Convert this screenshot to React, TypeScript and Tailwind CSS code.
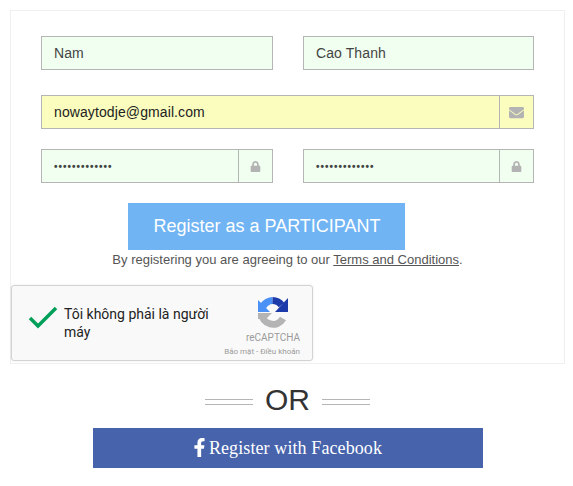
import React from 'react';
import { FaFacebookF, FaEnvelope, FaLock } from 'react-icons/fa';

const fieldClass = 'h-[34px] border border-[#b5b5b5] flex text-[14px] text-[#444]';

function PasswordField({ width }: { width: string }) {
  return (
    <div className={`${fieldClass} ${width} bg-[#f0fff0]`}>
      <div className="flex-1 pl-3 flex items-center leading-none">
        <span className="font-bold text-[10px] tracking-[1px] pt-[1px] text-[#444]">•••••••••••••</span>
      </div>
      <div className="w-[34px] border-l border-[#b5b5b5] flex items-center justify-center">
        <FaLock className="text-[#b3b3b3] text-[11px]" />
      </div>
    </div>
  );
}

function RecaptchaLogo() {
  return (
    <svg width="30" height="31" viewBox="0 0 30 31" fill="none">
      {/* grey lower half */}
      <path d="M3.5 16 A11.5 11.5 0 0 0 25 21.5" stroke="#b4b4b4" strokeWidth="7" />
      <path d="M0 16 L14 16 L8 22 L0 22 Z" fill="#b4b4b4" />
      {/* light blue upper left */}
      <path d="M14.5 3.5 A11.5 11.5 0 0 0 5 9.5" stroke="#4a90f5" strokeWidth="7" />
      <path d="M0 3 L0 15 L12 15 Z" fill="#4a90f5" />
      {/* dark blue upper right */}
      <path d="M14.5 3.5 A11.5 11.5 0 0 1 23.5 8" stroke="#1c3aa9" strokeWidth="7" />
      <path d="M30 1 L30 15 L17 15 Z" fill="#1c3aa9" />
    </svg>
  );
}

export default function App() {
  return (
    <div className="w-[573px] h-[486px] bg-white font-['Liberation_Sans',Arial,sans-serif] pt-[10px] pl-[10px]">
      <div className="w-[555px] h-[354px] border border-[#f0f0f0] flex flex-col">
        <div className="pt-[25px] pl-[30px] flex flex-col">
          <div className="flex gap-[30px]">
            <div className={`${fieldClass} w-[232px] bg-[#f0fff0] items-center pl-3 tracking-[0.1px]`}>Nam</div>
            <div className={`${fieldClass} w-[231px] bg-[#f0fff0] items-center pl-3 tracking-[0.1px]`}>Cao Thanh</div>
          </div>
          <div className={`${fieldClass} w-[493px] bg-[#fafdbd] mt-[25px]`}>
            <div className="flex-1 pl-3 flex items-center text-[#222] tracking-[0.1px]">nowaytodje@gmail.com</div>
            <div className="w-[34px] border-l border-[#b5b5b5] flex items-center justify-center">
              <FaEnvelope className="text-[#b3b3b3] text-[15px]" />
            </div>
          </div>
          <div className="flex gap-[30px] mt-[20px]">
            <PasswordField width="w-[232px]" />
            <PasswordField width="w-[231px]" />
          </div>
          <div className="mt-[20px] ml-[87px] w-[277px] h-[47px] bg-[#70b4f3] text-white text-[18px] flex items-center justify-center pl-[1px]">
            Register as a PARTICIPANT
          </div>
          <p className="w-[493px] text-center text-[13px] leading-[20px] text-[#555]">
            By registering you are agreeing to our <span className="underline">Terms and Conditions</span>.
          </p>
        </div>
        <div className="mt-[15px] w-[302px] h-[76px] bg-[#f9f9f9] border border-[#d3d3d3] rounded-[3px] shadow-[0_0_3px_rgba(0,0,0,0.08)] flex font-['Roboto',sans-serif]">
          <div className="w-[50px] flex items-center justify-end pr-[4px] pb-[11px]">
            <svg width="30" height="24" viewBox="0 0 30 24" fill="none">
              <path d="M2 12 L10 20 L28 2" stroke="#029f5b" strokeWidth="3.5" />
            </svg>
          </div>
          <div className="w-[158px] pl-[2px] pt-[19px] text-[14px] leading-[18px] text-[#222]">Tôi không phải là người máy</div>
          <div className="flex-1 flex flex-col items-end pr-[12px] pt-[11px]">
            <div className="mr-[12px]"><RecaptchaLogo /></div>
            <div className="text-[10px] leading-[12px] text-[#9b9b9b] mt-[4px]">reCAPTCHA</div>
            <div className="text-[8px] leading-[10px] text-[#9b9b9b] mt-[3px]">Bảo mật - Điều khoản</div>
          </div>
        </div>
      </div>
      <div className="w-[555px] h-[64px] pt-[8px] flex items-center justify-center gap-[12px]">
        <div className="w-[48px] h-[6px] mt-[3px] border-y border-[#b5b5b5]" />
        <span className="text-[30px] text-[#333] leading-none">OR</span>
        <div className="w-[48px] h-[6px] mt-[3px] border-y border-[#b5b5b5]" />
      </div>
      <div className="ml-[83px] w-[390px] h-[40px] bg-[#4763ac] text-white flex items-center justify-center pr-[4px] font-['Liberation_Serif',serif] text-[18px] tracking-[0.1px]">
        <FaFacebookF className="text-[19px] mb-[1px]" />
        <span>Register with Facebook</span>
      </div>
    </div>
  );
}
